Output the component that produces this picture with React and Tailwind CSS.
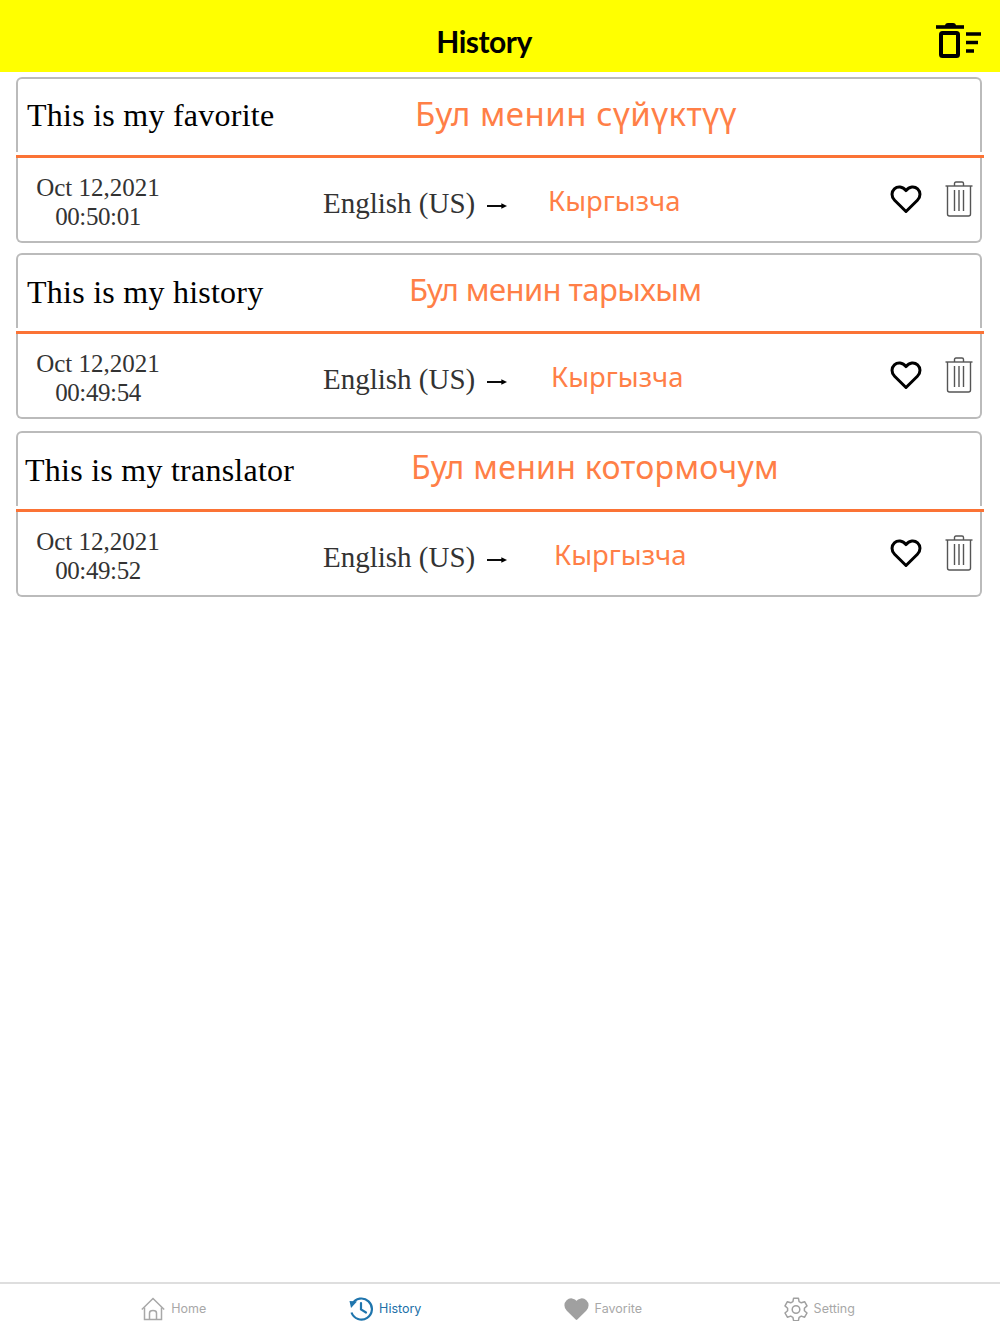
import React from "react";

const items = [
  { en: "This is my favorite", ky: "Бул менин сүйүктүү", enL: "pl-[9px] w-[397px] pb-[2px]", date: "Oct 12,2021", time: "00:50:01", lang: "pl-[40px]", gap: "mb-[10px]", kyOff: "pb-[5px] text-[33px] tracking-[0.5px]" },
  { en: "This is my history", ky: "Бул менин тарыхым", enL: "pl-[9px] w-[391px]", date: "Oct 12,2021", time: "00:49:54", lang: "pl-[43px]", gap: "mb-[12px]", kyOff: "pb-[5px] text-[31px] tracking-[-0.6px]" },
  { en: "This is my translator", ky: "Бул менин котормочум", enL: "pl-[7px] w-[393px]", date: "Oct 12,2021", time: "00:49:52", lang: "pl-[46px]", gap: "", kyOff: "pb-[5px] text-[32px] tracking-[0.3px]" },
];

const serif = "font-['Liberation_Serif',serif]";
const sans = "font-['Noto_Sans',sans-serif]";

function Heart({ className, fill = "none", stroke = "#000" }) {
  return (
    <svg viewBox="0 0 32 30" className={className}>
      <path d="M16 27.5 L4.6 16.2 C1 12.6 1.4 7.6 4.4 4.8 C7.6 1.9 12.6 2.2 16 6.6 C19.4 2.2 24.4 1.9 27.6 4.8 C30.6 7.6 31 12.6 27.4 16.2 Z" fill={fill} stroke={stroke} strokeWidth="3" strokeLinejoin="round" />
    </svg>
  );
}

function Trash() {
  return (
    <svg viewBox="0 0 28 36" className="w-[28px] h-[36px]" fill="none" stroke="#555" strokeWidth="1.4">
      <path d="M0.5 5 H27.5" />
      <path d="M9.5 5 V2.5 Q9.5 1 11 1 H17 Q18.5 1 18.5 2.5 V5" />
      <path d="M2.5 5 V33 Q2.5 35 4.5 35 H23.5 Q25.5 35 25.5 33 V5" />
      <path d="M9.5 9 V30 M14 9 V30 M18.5 9 V30" />
    </svg>
  );
}

function Card({ it }) {
  return (
    <div className={`flex flex-col ${it.gap}`}>
      <div className="h-[75px] border-2 border-b-0 border-[#bbbbbb] rounded-t-[6px] flex items-center">
        <div className={`${it.enL} ${serif} text-[32px] leading-none text-black shrink-0 tracking-[0.25px]`}>{it.en}</div>
        <div className={`${sans} ${it.kyOff} leading-none text-[#ff7f47]`}>{it.ky}</div>
      </div>
      <div className="h-[3px] mt-[3px] bg-[#fb7335] mr-[-2px]" />
      <div className="h-[85px] border-2 border-t-0 border-[#bbbbbb] rounded-b-[6px] flex items-center">
        <div className={`${serif} w-[162px] ml-[-1px] pt-[4px] text-center text-[25px] leading-[29px] text-[#333333] shrink-0`}>
          <div>{it.date}</div>
          <div className="tracking-[-0.4px]">{it.time}</div>
        </div>
        <div className={`${serif} ml-[144px] w-[185px] shrink-0 pt-[8px] text-[29px] leading-none text-[#333333] whitespace-nowrap flex items-center`}>
          English (US)
          <svg viewBox="0 0 22 10" className="w-[21px] h-[10px] ml-[12px] mt-[4px] shrink-0">
            <path d="M0 5 H17" stroke="#000" strokeWidth="2" />
            <path d="M15 2 L21 5 L15 8 Z" fill="#000" />
          </svg>
        </div>
        <div className={`${it.lang} ${sans} text-[27.5px] leading-none text-[#ff7f47] pt-[2px] shrink-0 whitespace-nowrap`}>Кыргызча</div>
        <div className="ml-auto flex items-center gap-[23px] pr-[7px] pb-[1px]">
          <Heart className="w-[32px] h-[30px]" />
          <Trash />
        </div>
      </div>
    </div>
  );
}

function Tab({ icon, label, color = "text-[#a8a8a8]", extra = "" }) {
  return (
    <div className={`flex items-center justify-center gap-[6px] ${extra}`}>
      {icon}
      <span className={`font-['Inter',sans-serif] text-[12.5px] leading-none mt-[2px] ${color}`}>{label}</span>
    </div>
  );
}

export default function App() {
  return (
    <div className="w-[1000px] h-[1334px] bg-white flex flex-col overflow-hidden">
      <header className="h-[72px] bg-[#ffff00] shrink-0 flex items-center justify-between">
        <div className="flex-1 text-center pl-[32px] font-['Lato',sans-serif] font-bold text-[30px] leading-none text-black pt-[10px] tracking-[-0.5px]">History</div>
        <svg viewBox="0 0 46 36" className="w-[46px] h-[36px] mr-[18px] mt-[10px] shrink-0">
          <path d="M0 4 H28" stroke="#000" strokeWidth="3.6" />
          <path d="M9 3 Q9 0 12 0 H17 Q20 0 20 3" fill="#000" />
          <rect x="5" y="10" width="17" height="23" rx="1.5" fill="none" stroke="#000" strokeWidth="4" />
          <path d="M30 11 H45 M30 19.5 H42 M30 28 H38" stroke="#000" strokeWidth="3.6" />
        </svg>
      </header>

      <main className="flex-1 pt-[5px] pl-[16px] pr-[18px]">
        {items.map((it) => <Card key={it.time} it={it} />)}
      </main>

      <footer className="h-[52px] shrink-0 border-t-2 border-[#dedede] grid grid-cols-4 px-[65px] pb-[1px] items-center">
        <Tab
          label="Home"
          icon={
            <svg viewBox="0 0 24 24" className="w-[24px] h-[24px]" fill="none" stroke="#a8a8a8" strokeWidth="1.5">
              <path d="M0.8 12.5 L12 1.5 L23.2 12.5" />
              <path d="M3.5 10.5 V22.5 H20.5 V10.5" />
              <path d="M8.5 22.5 V16 Q8.5 13.5 12 13.5 Q15.5 13.5 15.5 16 V22.5" />
            </svg>
          }
        />
        <Tab
          label="History"
          color="text-[#2270a8]"
          extra="pr-[12px]"
          icon={
            <svg viewBox="0 0 24 24" className="w-[24px] h-[24px]" fill="none" stroke="#1f75ad" strokeWidth="2.2">
              <path d="M3.2 7 A10.5 10.5 0 1 1 2.5 15.5" />
              <path d="M0.5 4 L8 4.5 L2 11 Z" fill="#1f75ad" stroke="none" />
              <path d="M12 6 V12.5 L17 15.5" strokeLinecap="round" />
            </svg>
          }
        />
        <Tab label="Favorite" extra="pr-[12px]" icon={<Heart className="w-[25px] h-[24px]" fill="#a0a0a0" stroke="#a0a0a0" />} />
        <Tab
          label="Setting"
          extra="pr-[14px]"
          icon={
            <svg viewBox="0 0 24 24" className="w-[24px] h-[24px]" fill="none" stroke="#a0a0a0" strokeWidth="1.5" strokeLinejoin="round">
              <path d="M9.6 1.2 h4.8 l0.7 3.4 l2.2 1.2 l3.3-1.1 l2.4 4.2 l-2.6 2.3 v2.5 l2.6 2.3 l-2.4 4.2 l-3.3-1.1 l-2.2 1.2 l-0.7 3.4 h-4.8 l-0.7-3.4 l-2.2-1.2 l-3.3 1.1 l-2.4-4.2 l2.6-2.3 v-2.5 l-2.6-2.3 l2.4-4.2 l3.3 1.1 l2.2-1.2 z" />
              <circle cx="12" cy="12.5" r="3.8" />
            </svg>
          }
        />
      </footer>
    </div>
  );
}
